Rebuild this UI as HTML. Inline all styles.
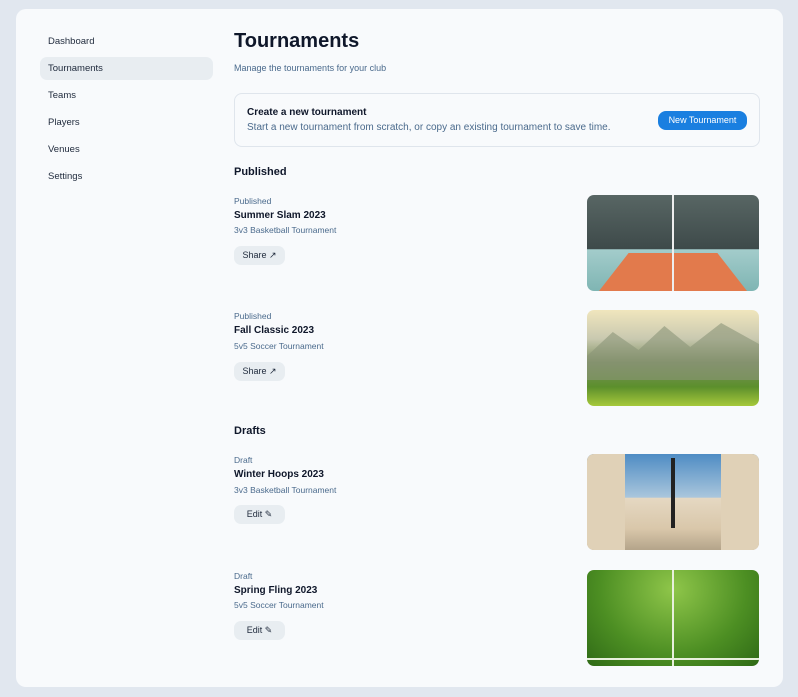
<!DOCTYPE html>
<html><head><style>
*{box-sizing:border-box;margin:0;padding:0}
body{width:798px;height:697px;background:#e1e7ef;font-family:"Liberation Sans",sans-serif;position:relative;overflow:hidden}
.card{position:absolute;left:16px;top:9px;width:767px;height:678px;background:#f8fafc;border-radius:10px}
.nav{position:absolute;left:40px;width:173px;height:23px;font-size:9.5px;color:#1e293b;padding-left:8px;line-height:24px;border-radius:7px}
.nav.act{background:#e8edf1}
.abs{position:absolute}
h1{position:absolute;left:234px;top:30px;font-size:20px;font-weight:bold;color:#0f172a}
.sub{font-size:9px;color:#4a6a8c}
.btn{position:absolute;left:234px;width:51px;height:19px;background:#e8edf1;border-radius:7px;font-size:9px;color:#1e293b;line-height:19px;text-align:center}
.img{position:absolute;left:587px;width:172px;height:96px;border-radius:7px;overflow:hidden}
.st{font-size:8.5px;color:#4a6a8c}
.tt{font-size:10px;font-weight:bold;color:#0f172a}
</style></head><body>
<div class="card"></div>
<div class="nav" style="top:30px">Dashboard</div>
<div class="nav act" style="top:57px">Tournaments</div>
<div class="nav" style="top:84px">Teams</div>
<div class="nav" style="top:111px">Players</div>
<div class="nav" style="top:138px">Venues</div>
<div class="nav" style="top:165px">Settings</div>
<h1>Tournaments</h1>
<div class="abs sub" style="left:234px;top:63px">Manage the tournaments for your club</div>
<div class="abs" style="left:234px;top:93px;width:526px;height:54px;border:1px solid #dfe5ec;border-radius:8px"></div>
<div class="abs" style="left:247px;top:107px;font-size:10px;font-weight:bold;color:#0f172a">Create a new tournament</div>
<div class="abs" style="left:247px;top:122px;font-size:10px;color:#4a6a8c">Start a new tournament from scratch, or copy an existing tournament to save time.</div>
<div class="abs" style="left:658px;top:111px;width:89px;height:19px;background:#1a7fe0;border-radius:8px;color:#fff;font-size:9px;line-height:19px;text-align:center">New Tournament</div>
<div class="abs" style="left:234px;top:166px;font-size:11px;font-weight:bold;color:#0f172a">Published</div>

<div class="abs st" style="left:234px;top:196px">Published</div>
<div class="abs tt" style="left:234px;top:210px">Summer Slam 2023</div>
<div class="abs st" style="left:234px;top:225px">3v3 Basketball Tournament</div>
<div class="btn" style="top:246px">Share ↗</div>
<div class="img" style="top:195px;background:linear-gradient(#586664,#3e4a4a 56%,#a3cccb 57%,#7fb5b3)">
<div class="abs" style="left:12px;top:58px;width:148px;height:38px;background:#e27a4c;clip-path:polygon(20% 0,80% 0,100% 100%,0 100%)"></div>
<div class="abs" style="left:85px;top:0;width:2px;height:96px;background:#eee"></div></div>

<div class="abs st" style="left:234px;top:311px">Published</div>
<div class="abs tt" style="left:234px;top:325px">Fall Classic 2023</div>
<div class="abs st" style="left:234px;top:341px">5v5 Soccer Tournament</div>
<div class="btn" style="top:362px">Share ↗</div>
<div class="img" style="top:310px;background:linear-gradient(#f0e6bd,#c9c9b0 30%,#7c8f60 55%,#5c8f2c 80%,#a6c93a)">
<div class="abs" style="left:0;top:10px;width:172px;height:60px;background:#8a9478;opacity:.6;clip-path:polygon(0 60%,15% 20%,30% 50%,45% 10%,60% 45%,78% 5%,100% 40%,100% 100%,0 100%)"></div></div>

<div class="abs" style="left:234px;top:425px;font-size:11px;font-weight:bold;color:#0f172a">Drafts</div>

<div class="abs st" style="left:234px;top:455px">Draft</div>
<div class="abs tt" style="left:234px;top:469px">Winter Hoops 2023</div>
<div class="abs st" style="left:234px;top:485px">3v3 Basketball Tournament</div>
<div class="btn" style="top:505px">Edit ✎</div>
<div class="img" style="top:454px;background:linear-gradient(#4f8cc4,#a9c6dc 45%,#e5d8c2 46%,#d9c7aa 78%,#b4a48a)">
<div class="abs" style="left:0;top:0;width:38px;height:96px;background:#e0d1b7"></div>
<div class="abs" style="right:0;top:0;width:38px;height:96px;background:#e0d1b7"></div>
<div class="abs" style="left:84px;top:4px;width:4px;height:70px;background:#222"></div></div>

<div class="abs st" style="left:234px;top:571px">Draft</div>
<div class="abs tt" style="left:234px;top:585px">Spring Fling 2023</div>
<div class="abs st" style="left:234px;top:600px">5v5 Soccer Tournament</div>
<div class="btn" style="top:621px">Edit ✎</div>
<div class="img" style="top:570px;background:radial-gradient(ellipse at 50% 20%,#8fc64a,#4d8f23 60%,#2f6a16)">
<div class="abs" style="left:85px;top:0;width:2px;height:96px;background:#e8f0dc"></div>
<div class="abs" style="left:0;top:88px;width:172px;height:2px;background:#e8f0dc"></div></div>
</body></html>
